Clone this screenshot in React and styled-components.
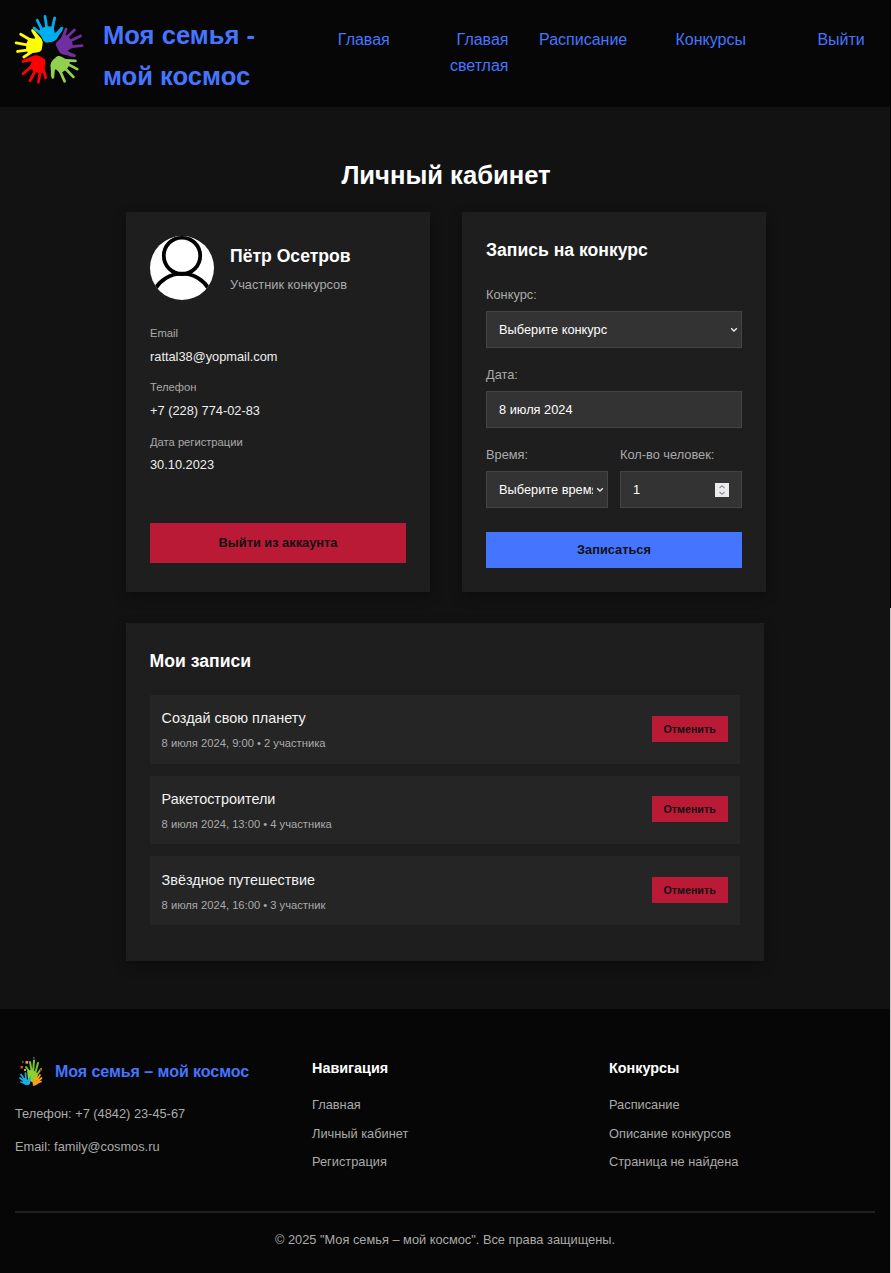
import React from "react";
import styled, { createGlobalStyle } from "styled-components";

const Global = createGlobalStyle`
  * { box-sizing: border-box; }
  body {
    margin: 0;
    background: #121212;
    color: #fff;
    font-family: "Liberation Sans", Arial, sans-serif;
    font-size: 12.8px;
    line-height: 1.6;
  }
  h1, h2, h3, p, ul { margin: 0; padding: 0; }
  ul { list-style: none; }
`;

const Page = styled.div`
  display: flex;
  width: 891px;
  height: 1273px;
  overflow: hidden;
`;
const Content = styled.div`
  width: 890px;
  height: 1273px;
  display: flex;
  flex-direction: column;
`;
const Scrollbar = styled.div`
  width: 1px;
  padding-top: 608px;
  background: #000;
`;
const Thumb = styled.div`
  height: 665px;
  background: #c6c6c6;
`;

const Header = styled.header`
  height: 107px;
  flex: none;
  display: flex;
  align-items: flex-start;
  padding: 14px 25px 0 14px;
  background: #060606;
`;
const HeaderLogo = styled.svg`
  width: 70px;
  height: 70px;
  flex: none;
  overflow: visible;
`;
const SiteName = styled.div`
  width: 187px;
  margin-left: 19px;
  padding-top: 1px;
  font-size: 25.6px;
  font-weight: 700;
  line-height: 41px;
  color: #4575ff;
  white-space: nowrap;
`;
const Nav = styled.nav`
  flex: 1;
  margin-left: -19px;
  padding-top: 13px;
  display: grid;
  grid-template-columns: repeat(5, 118.75px);
`;
const NavLink = styled.a`
  padding-left: 20px;
  font-size: 16px;
  line-height: 25.6px;
  text-align: right;
  color: #4575ff;
`;

const Main = styled.main`
  height: 902px;
  flex: none;
  padding: 47px 0 0 126px;
`;
const PageTitle = styled.h1`
  width: 640px;
  height: 42px;
  margin-bottom: 16px;
  font-size: 25.6px;
  line-height: 42px;
  text-align: center;
`;
const Cards = styled.div`
  display: grid;
  grid-template-columns: 304px 304px;
  gap: 32px;
`;
const Card = styled.section`
  height: ${(p) => p.$height}px;
  width: ${(p) => (p.$width ? p.$width + "px" : "auto")};
  margin: ${(p) => p.$margin || 0};
  padding: 24px;
  display: flex;
  flex-direction: column;
  background: #1e1e1e;
  box-shadow: 0 4px 12px rgba(0, 0, 0, 0.3);
`;
const CardTitle = styled.h2`
  font-size: 17.6px;
  line-height: 29px;
  margin-bottom: ${(p) => p.$gap}px;
`;
const Profile = styled.div`
  display: flex;
  align-items: center;
  gap: 16px;
  height: 64px;
  margin-bottom: 25px;
`;
const Avatar = styled.svg`
  width: 64px;
  height: 64px;
`;
const Name = styled.div`
  font-size: 17.6px;
  font-weight: 700;
  line-height: 29px;
  margin: 0 0 3px;
`;
const Muted = styled.div`
  line-height: 21px;
  color: #aaa;
`;
const Fact = styled.div`
  margin-bottom: 12px;
`;
const FactLabel = styled.div`
  font-size: 11.2px;
  line-height: 17.6px;
  margin-bottom: 4px;
  color: #aaa;
`;
const FactValue = styled.div`
  line-height: 20.8px;
  color: #eee;
`;
const Button = styled.button`
  height: ${(p) => p.$height}px;
  width: 100%;
  border: 0;
  padding: 0 0 1px;
  margin: ${(p) => p.$margin || 0};
  background: ${(p) => (p.$danger ? "#ba1a36" : "#4575ff")};
  color: #121212;
  font: 700 12.8px "Liberation Sans", Arial, sans-serif;
`;
const SmallButton = styled(Button)`
  width: 76px;
  padding: 0;
  font-size: 10.7px;
  flex: none;
`;
const Field = styled.label`
  display: block;
  min-width: 0;
  margin-bottom: 16px;
  line-height: 21px;
  color: #aaa;
`;
const FieldRow = styled.div`
  display: grid;
  grid-template-columns: minmax(0, 1fr) minmax(0, 1fr);
  gap: 12px;
`;
const Control = styled.div`
  display: flex;
  align-items: center;
  height: 37px;
  margin-top: 6px;
  padding: 0 ${(p) => p.$right}px 0 12px;
  border: 1px solid #444;
  background: #333;
  color: #fff;
`;
const ControlText = styled.span`
  flex: 1;
  min-width: 0;
  padding-bottom: 1px;
  margin-right: 3px;
  overflow: hidden;
  white-space: nowrap;
`;
const Chevron = styled.svg`
  width: 8px;
  height: 6px;
  flex: none;
  margin-top: 1px;
`;
const Stepper = styled.svg`
  width: 14px;
  height: 14px;
  margin-top: 1px;
  background: #ebebed;
`;

const Bookings = styled.ul`
  display: grid;
  gap: 12px;
`;
const Booking = styled.li`
  display: flex;
  align-items: center;
  justify-content: space-between;
  height: 68.7px;
  padding: 0 12px;
  background: #252525;
`;
const BookingTitle = styled.div`
  font-size: 14.4px;
  line-height: 23px;
  margin: 1px 0 4px;
  color: #f2f2f2;
`;
const BookingMeta = styled.div`
  font-size: 11.2px;
  line-height: 18px;
  color: #aaa;
`;

const Footer = styled.footer`
  flex: 1;
  padding: 48px 15px 0;
  background: #060606;
  color: #aaa;
`;
const FooterColumns = styled.div`
  display: grid;
  grid-template-columns: 297px 297px 1fr;
  height: 156px;
  border-bottom: 2px solid #202020;
`;
const Brand = styled.div`
  display: flex;
  align-items: center;
  gap: 10px;
  height: 30px;
  margin-bottom: 16px;
  font-size: 16px;
  letter-spacing: -0.04px;
  font-weight: 700;
  color: #4575ff;
  white-space: nowrap;
`;
const BrandLogo = styled.svg`
  width: 30px;
  height: 32px;
`;
const Contact = styled.p`
  margin-bottom: 12px;
  line-height: 21px;
`;
const FooterTitle = styled.h3`
  font-size: 14.4px;
  line-height: 22px;
  margin-bottom: 16px;
  color: #fff;
`;
const FooterLink = styled.li`
  line-height: 20.6px;
  margin-bottom: 8px;
`;
const Copyright = styled.p`
  margin-top: 17px;
  text-align: center;
  line-height: 20.8px;
`;

const HandShape = () => (
  <>
    <path
      d="M-30 -55L-21 -64Q-2 -73 15 -66L18 -50Q22 -48 28 -57L37 -67Q43 -70 44 -64Q42 -55 33 -45L24 -30Q18 -23 8 -22L-8 -20Q-15 -22 -19 -32Z"
      stroke="none"
    />
    <path d="M-21 -45L-44 -64M-18 -54L-34 -87M-5 -58L-11 -99M10 -58L18 -94" fill="none" strokeLinecap="round" />
  </>
);

const hands = [
  { color: "#00adef", x: -1, y: 0 },
  { color: "#702fa0", x: 4, y: 1 },
  { color: "#92d050", x: 6, y: 9 },
  { color: "#ff0000", x: -8, y: 8 },
  { color: "#ffff00", x: -1, y: 1 },
];

const LogoHands = () => (
  <HeaderLogo viewBox="-105 -106 210 210">
    {hands.map(({ color, x, y }, i) => (
      <g
        key={color}
        transform={`translate(${x} ${y}) rotate(${i * 72})`}
        fill={color}
        stroke={color}
        strokeWidth="8.4"
      >
        <HandShape />
      </g>
    ))}
  </HeaderLogo>
);

const FooterLogo = () => (
  <BrandLogo viewBox="0 0 30 32">
    <g stroke="#75c62b" strokeWidth="2" strokeLinecap="round" fill="none">
      <path d="M16 18L11 11M17 17L15 6M18 17L19 4.5M20 18L23 7M21 20L26 13" />
    </g>
    <path d="M12 15Q17 12 22 17L21 25Q16 28 13 23Z" fill="#8bd32f" />
    <g stroke="#19aee3" strokeWidth="1.7" strokeLinecap="round">
      <path d="M10 24L6 18.5M9 25L5 22M9 27L6 26M11 24L10.5 17" />
    </g>
    <path d="M8 22L12 24L16 20L15 28Q11 31 8 27Z" fill="#19aee3" />
    <g stroke="#ffa21c" strokeWidth="1.7" strokeLinecap="round">
      <path d="M21 24L22 19M22 24L25 19M22 26L26.5 22M22 27L26 25.5" />
    </g>
    <path d="M17 22L20 25L25 24Q24 29 18 30Z" fill="#ff9a16" />
    <path d="M10.5 5h2.7v2.7h-2.7z" fill="#ff9a16" />
    <path d="M5.5 10h2.5v2.5H5.5z" fill="#e94220" />
    <path d="M9 13h2v2H9z" fill="#ff9a16" />
    <path d="M7 5h1.7v1.7H7z" fill="#437923" />
    <path d="M18 1h1.7v1.7H18z" fill="#087083" />
    <path d="M25 13.5h1.7v1.7H25z" fill="#b91a35" />
  </BrandLogo>
);

const Down = () => (
  <Chevron viewBox="0 0 8 6">
    <path d="M1.2 1.2L4 4L6.8 1.2" fill="none" stroke="#eee" strokeWidth="1.3" />
  </Chevron>
);

const bookings = [
  ["Создай свою планету", "8 июля 2024, 9:00 • 2 участника"],
  ["Ракетостроители", "8 июля 2024, 13:00 • 4 участника"],
  ["Звёздное путешествие", "8 июля 2024, 16:00 • 3 участник"],
];

const facts = [
  ["Email", "rattal38@yopmail.com"],
  ["Телефон", "+7 (228) 774-02-83"],
  ["Дата регистрации", "30.10.2023"],
];

const footerGroups = [
  ["Навигация", ["Главная", "Личный кабинет", "Регистрация"]],
  ["Конкурсы", ["Расписание", "Описание конкурсов", "Страница не найдена"]],
];

export default function App() {
  return (
    <Page>
      <Global />
      <Content>
        <Header>
          <LogoHands />
          <SiteName>
            Моя семья -<br />
            мой космос
          </SiteName>
          <Nav>
            {["Главая", "Главая светлая", "Расписание", "Конкурсы", "Выйти"].map((t) => (
              <NavLink key={t}>{t}</NavLink>
            ))}
          </Nav>
        </Header>
        <Main>
          <PageTitle>Личный кабинет</PageTitle>
          <Cards>
            <Card $height={380}>
              <Profile>
                <Avatar viewBox="0 0 64 64">
                  <defs>
                    <clipPath id="avatar-circle">
                      <circle cx="32" cy="32" r="32" />
                    </clipPath>
                  </defs>
                  <g clipPath="url(#avatar-circle)">
                    <path fill="#fff" d="M0 0h64v64H0z" />
                    <g fill="none" stroke="#000" strokeWidth="3.8">
                      <circle cx="32" cy="19.8" r="18.2" />
                      <path d="M5 53A31.5 31.5 0 0 1 59 53" />
                    </g>
                  </g>
                </Avatar>
                <div>
                  <Name>Пётр Осетров</Name>
                  <Muted>Участник конкурсов</Muted>
                </div>
              </Profile>
              {facts.map(([label, value]) => (
                <Fact key={label}>
                  <FactLabel>{label}</FactLabel>
                  <FactValue>{value}</FactValue>
                </Fact>
              ))}
              <Button $danger $height={40} $margin="auto 0 5px">
                Выйти из аккаунта
              </Button>
            </Card>
            <Card $height={380}>
              <CardTitle $gap={19}>Запись на конкурс</CardTitle>
              <Field>
                Конкурс:
                <Control $right={3}>
                  <ControlText>Выберите конкурс</ControlText>
                  <Down />
                </Control>
              </Field>
              <Field>
                Дата:
                <Control $right={12}>
                  <ControlText>8 июля 2024</ControlText>
                </Control>
              </Field>
              <FieldRow>
                <Field>
                  Время:
                  <Control $right={3}>
                    <ControlText>Выберите время</ControlText>
                    <Down />
                  </Control>
                </Field>
                <Field>
                  Кол-во человек:
                  <Control $right={12}>
                    <ControlText>1</ControlText>
                    <Stepper viewBox="0 0 14 14">
                      <path
                        d="M4.5 5L7 2.7L9.5 5M4.5 9L7 11.3L9.5 9"
                        fill="none"
                        stroke="#929298"
                        strokeWidth="1.2"
                      />
                    </Stepper>
                  </Control>
                </Field>
              </FieldRow>
              <Button $height={36} $margin="auto 0 0">
                Записаться
              </Button>
            </Card>
          </Cards>
          <Card $height={338} $width={638} $margin="31px 0 0 -0.4px">
            <CardTitle $gap={19}>Мои записи</CardTitle>
            <Bookings>
              {bookings.map(([title, meta]) => (
                <Booking key={title}>
                  <div>
                    <BookingTitle>{title}</BookingTitle>
                    <BookingMeta>{meta}</BookingMeta>
                  </div>
                  <SmallButton $danger $height={26} $margin="0 0 1.6px">
                    Отменить
                  </SmallButton>
                </Booking>
              ))}
            </Bookings>
          </Card>
        </Main>
        <Footer>
          <FooterColumns>
            <div>
              <Brand>
                <FooterLogo />
                Моя семья – мой космос
              </Brand>
              <Contact>Телефон: +7 (4842) 23-45-67</Contact>
              <Contact>Email: family@cosmos.ru</Contact>
            </div>
            {footerGroups.map(([title, links]) => (
              <div key={title}>
                <FooterTitle>{title}</FooterTitle>
                <ul>
                  {links.map((l) => (
                    <FooterLink key={l}>{l}</FooterLink>
                  ))}
                </ul>
              </div>
            ))}
          </FooterColumns>
          <Copyright>© 2025 "Моя семья – мой космос". Все права защищены.</Copyright>
        </Footer>
      </Content>
      <Scrollbar>
        <Thumb />
      </Scrollbar>
    </Page>
  );
}
